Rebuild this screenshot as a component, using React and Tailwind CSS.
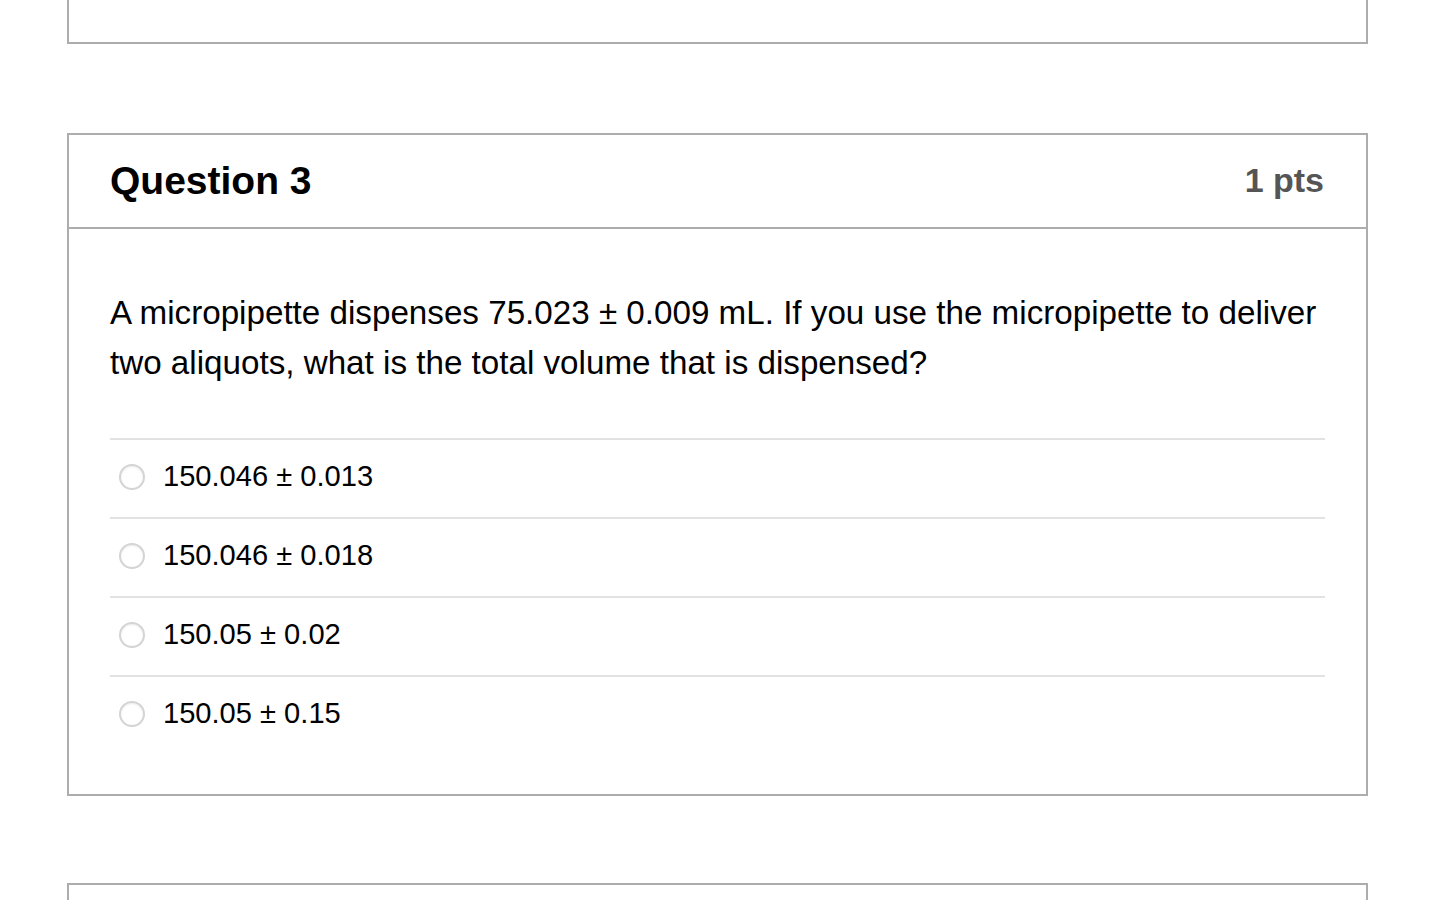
import React from "react";

const answers = [
  "150.046 ± 0.013",
  "150.046 ± 0.018",
  "150.05 ± 0.02",
  "150.05 ± 0.15",
];

export default function App() {
  return (
    <div
      className="w-[1440px] h-[900px] overflow-hidden bg-white text-black"
      style={{ fontFamily: '"Liberation Sans", Arial, sans-serif' }}
    >
      <div className="ml-[67px] w-[1301px] h-[44px] border-2 border-t-0 border-[#adadad]" />

      <div className="ml-[67px] mt-[89px] w-[1301px] border-2 border-[#adadad]">
        <div className="h-[92px] flex items-center justify-between px-[41px] pb-[2px]">
          <div className="text-[39px] font-bold leading-none">Question 3</div>
          <div className="text-[34px] font-bold leading-none text-[#555555] pr-[1px]">1 pts</div>
        </div>
        <div className="border-t-2 border-[#adadad] px-[41px] pt-[59px] pb-[40px]">
          <p className="text-[33.2px] leading-[50px]">
            A micropipette dispenses 75.023 ± 0.009 mL. If you use the micropipette to deliver two aliquots, what is the total volume that is dispensed?
          </p>
          <div className="mt-[50px]">
            {answers.map((a) => (
              <div key={a} className="border-t-2 border-[#e2e2e2] h-[79px] flex items-center pl-[9px] pb-[3px]">
                <span className="w-[26px] h-[26px] rounded-full border-2 border-[#d4d4d4] bg-white shadow-[inset_0_1px_2px_rgba(0,0,0,0.08)]" />
                <span className="ml-[18px] text-[29.1px] leading-none">{a}</span>
              </div>
            ))}
          </div>
        </div>
      </div>

      <div className="ml-[67px] mt-[87px] w-[1301px] h-[40px] border-2 border-b-0 border-[#adadad]" />
    </div>
  );
}
